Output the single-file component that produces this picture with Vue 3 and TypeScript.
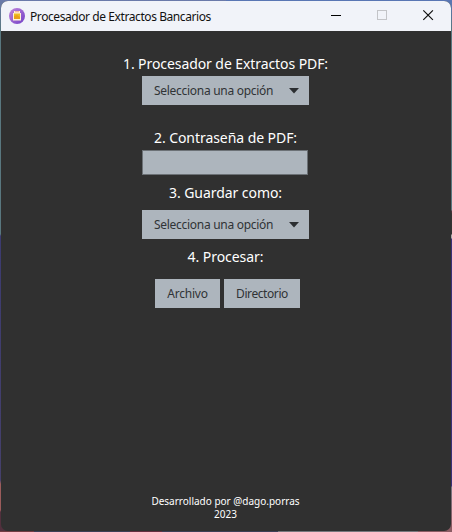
<script setup lang="ts">
import { ref } from 'vue'

const placeholder = 'Selecciona una opción'
const password = ref('')
const actions: string[] = ['Archivo', 'Directorio']
</script>

<template>
  <div class="desktop">
    <main class="window">
      <header class="titlebar">
        <svg class="logo" viewBox="0 0 16 16">
          <defs>
            <linearGradient id="badge" x1="0" y1="0" x2="1" y2="1">
              <stop offset="0" stop-color="#c184dc" />
              <stop offset="1" stop-color="#7141c6" />
            </linearGradient>
          </defs>
          <circle cx="8" cy="8" r="8" fill="url(#badge)" />
          <path d="M5 3h6v2h1v7.5H4V5h1z" fill="#fff3d8" />
          <path d="M5 5.5h6v5H5z" fill="#efbd22" />
          <path d="M5 8l3-1 3 2v2H5z" fill="#e9a11a" />
          <path d="M6 3.2h4v1H6z" fill="#f2a28b" />
        </svg>
        <span class="title">Procesador de Extractos Bancarios</span>
        <svg class="control" viewBox="0 0 46 30"><path d="M18 14.5h10" stroke="#000" /></svg>
        <svg class="control" viewBox="0 0 46 30"><rect x="18.5" y="9.5" width="9" height="9" fill="none" stroke="#c3c4c8" /></svg>
        <svg class="control" viewBox="0 0 46 30"><path d="M18.3 9.3l9.6 9.6M27.9 9.3l-9.6 9.6" stroke="#111" stroke-width="1.2" /></svg>
      </header>

      <section class="form">
        <label class="label first">1. Procesador de Extractos PDF:</label>
        <button class="select">
          <span>{{ placeholder }}</span>
          <svg class="arrow" viewBox="0 0 10 6"><path d="M0 0h10L5 5.5z" fill="#2b2e31" /></svg>
        </button>
        <label class="label second">2. Contraseña de PDF:</label>
        <input v-model="password" class="entry" type="password" />
        <label class="label third">3. Guardar como:</label>
        <button class="select">
          <span>{{ placeholder }}</span>
          <svg class="arrow" viewBox="0 0 10 6"><path d="M0 0h10L5 5.5z" fill="#2b2e31" /></svg>
        </button>
        <label class="label fourth">4. Procesar:</label>
        <div class="actions">
          <button v-for="action in actions" :key="action" class="action">{{ action }}</button>
        </div>
      </section>

      <footer class="credits">
        <div class="author">Desarrollado por @dago.porras</div>
        <div>2023</div>
      </footer>
    </main>
  </div>
</template>

<style scoped>
.desktop {
  box-sizing: border-box;
  width: 452px;
  height: 532px;
  padding: 1px;
  background:
    linear-gradient(90deg, #723c42 0 34px, #3d4057 34px 130px, #652f40 130px 162px, #3d4057 162px 278px, #77777c 278px 418px, #8c5c64 418px) 0 100% / 100% 1px no-repeat,
    linear-gradient(#6b7aaa 0, #59777f 30px, #59777f 234px, #3c3b70 236px, #45406b 480px, #9b5c5b 484px, #9b5c5b 510px, #51303d 512px) 0 0 / 50% 100% no-repeat,
    linear-gradient(#5976b5 0, #59777f 30px, #59777f 210px, #53343c 211px, #333 214px, #333 234px, #aaa 235px, #aaa 238px, #393177 239px, #393177 486px, #777782 487px, #8c5c64 525px) 100% 0 / 50% 100% no-repeat;
  font-family: "Noto Sans", sans-serif;
}
.window {
  display: flex;
  flex-direction: column;
  height: 530px;
  overflow: hidden;
  border-radius: 7px;
  background: #303030;
}
.titlebar {
  display: flex;
  align-items: center;
  flex: none;
  height: 30px;
  padding-left: 8px;
  background: #f1f3f9;
}
.logo {
  width: 16px;
  height: 16px;
  margin-right: 5px;
}
.title {
  flex: 1;
  color: #111;
  font-size: 12px;
  letter-spacing: -0.42px;
  white-space: nowrap;
}
.control {
  flex: none;
  width: 46px;
  height: 30px;
}
.form {
  display: flex;
  flex-direction: column;
  align-items: center;
  flex: 1;
  padding-right: 1px;
}
.label {
  height: 20px;
  color: #fff;
  font-size: 14px;
  line-height: 20px;
  letter-spacing: -0.06px;
  white-space: nowrap;
}
.first { margin-top: 23px; margin-bottom: 2px; letter-spacing: -0.08px; }
.second { margin-top: 23px; margin-bottom: 2px; }
.third { margin-top: 8px; margin-bottom: 7px; }
.fourth { margin-top: 8px; margin-bottom: 12px; }
button {
  border: 0;
  border-radius: 0;
  background: #adb5bd;
  color: #303336;
  font-family: inherit;
  font-size: 12px;
}
.select {
  display: flex;
  align-items: center;
  justify-content: space-between;
  width: 167px;
  height: 29px;
  padding: 0 10px 0 12px;
  letter-spacing: -0.29px;
  white-space: nowrap;
}
.arrow {
  width: 10px;
  height: 6px;
}
.entry {
  box-sizing: border-box;
  width: 166px;
  height: 25px;
  padding: 0 5px;
  margin-right: 1px;
  border: 1px solid #6c7176;
  border-radius: 0;
  outline: 0;
  background: #adb5bd;
}
.actions {
  display: flex;
  gap: 4px;
  margin-left: 4px;
}
.action {
  width: 65px;
  height: 29px;
  padding: 0;
  letter-spacing: -0.2px;
}
.action:last-child {
  width: 76px;
  letter-spacing: -0.42px;
}
.credits {
  padding: 0 1px 10px 0;
  color: #fff;
  font-size: 10px;
  line-height: 13px;
  text-align: center;
}
</style>
